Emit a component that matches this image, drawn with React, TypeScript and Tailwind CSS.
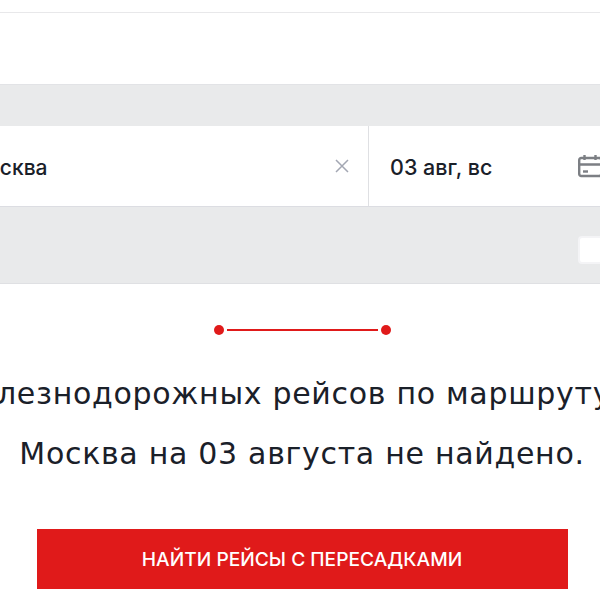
export default function App() {
  return (
    <div className="flex h-[600px] w-[600px] flex-col overflow-hidden bg-white font-['Inter',sans-serif] text-[#1a2029]">
      <div className="mt-3 h-px shrink-0 bg-[#e8e8ea]" />
      <div className="h-[71px] shrink-0" />
      <div className="h-[42px] shrink-0 border-t border-[#e2e3e6] bg-[#e9eaeb]" />
      <div className="flex h-[81px] shrink-0 border-b border-[#dcdde2] bg-white">
        <div className="flex w-[368px] shrink-0 items-center justify-between pr-[19px]">
          <span className="-ml-[32px] pt-[2px] text-[21px] font-medium leading-none">Москва</span>
          <svg width="14" height="14" viewBox="0 0 14 14" fill="none" stroke="#a3a7b3" strokeWidth="1.5">
            <path d="M1 1L13 13M13 1L1 13" />
          </svg>
        </div>
        <div className="flex flex-1 items-center justify-between border-l border-[#dfe0e3] pl-[21px]">
          <span className="pt-[3px] text-[21.5px] font-medium leading-none">03 авг, вс</span>
          <svg className="-mr-[2px]" width="24" height="24" viewBox="0 0 24 24" fill="none" stroke="#7c7f84" strokeWidth="2.4">
            <rect x="1.2" y="4" width="22" height="18" rx="2" />
            <path d="M1 10.5H23M6.5 1V6M17.5 1V6" />
            <path d="M5 17.5H10" />
          </svg>
        </div>
      </div>
      <div className="flex h-[77px] shrink-0 items-end justify-end border-b border-[#dfe0e3] bg-[#e9eaeb] pb-[19px]">
        <div className="-mr-[10px] h-[28px] w-[32px] rounded-[4px] border-2 border-[#f4f4f6] bg-white" />
      </div>
      <div className="mt-[41px] flex items-center justify-center pl-[5px]">
        <span className="h-[10px] w-[10px] rounded-full bg-[#e01a1a]" />
        <span className="mx-[3px] h-[2px] w-[151px] bg-[#e01a1a]" />
        <span className="h-[10px] w-[10px] rounded-full bg-[#e01a1a]" />
      </div>
      <div className="mt-[29px] flex justify-center pr-[44px]">
        <p className="shrink-0 whitespace-nowrap font-['DejaVu_Sans',sans-serif] text-[30px] leading-[60px] tracking-[0.7px]">Железнодорожных рейсов по маршруту</p>
      </div>
      <p className="whitespace-nowrap pl-[4px] text-center font-['DejaVu_Sans',sans-serif] text-[30px] leading-[60px] tracking-[0.7px]">Москва на 03 августа не найдено.</p>
      <button className="mx-auto mt-[45px] flex h-[60px] w-[531px] shrink-0 translate-x-[2px] items-center justify-center bg-[#e01a1a] text-[19.2px] font-medium text-white">
        НАЙТИ РЕЙСЫ С ПЕРЕСАДКАМИ
      </button>
    </div>
  );
}
